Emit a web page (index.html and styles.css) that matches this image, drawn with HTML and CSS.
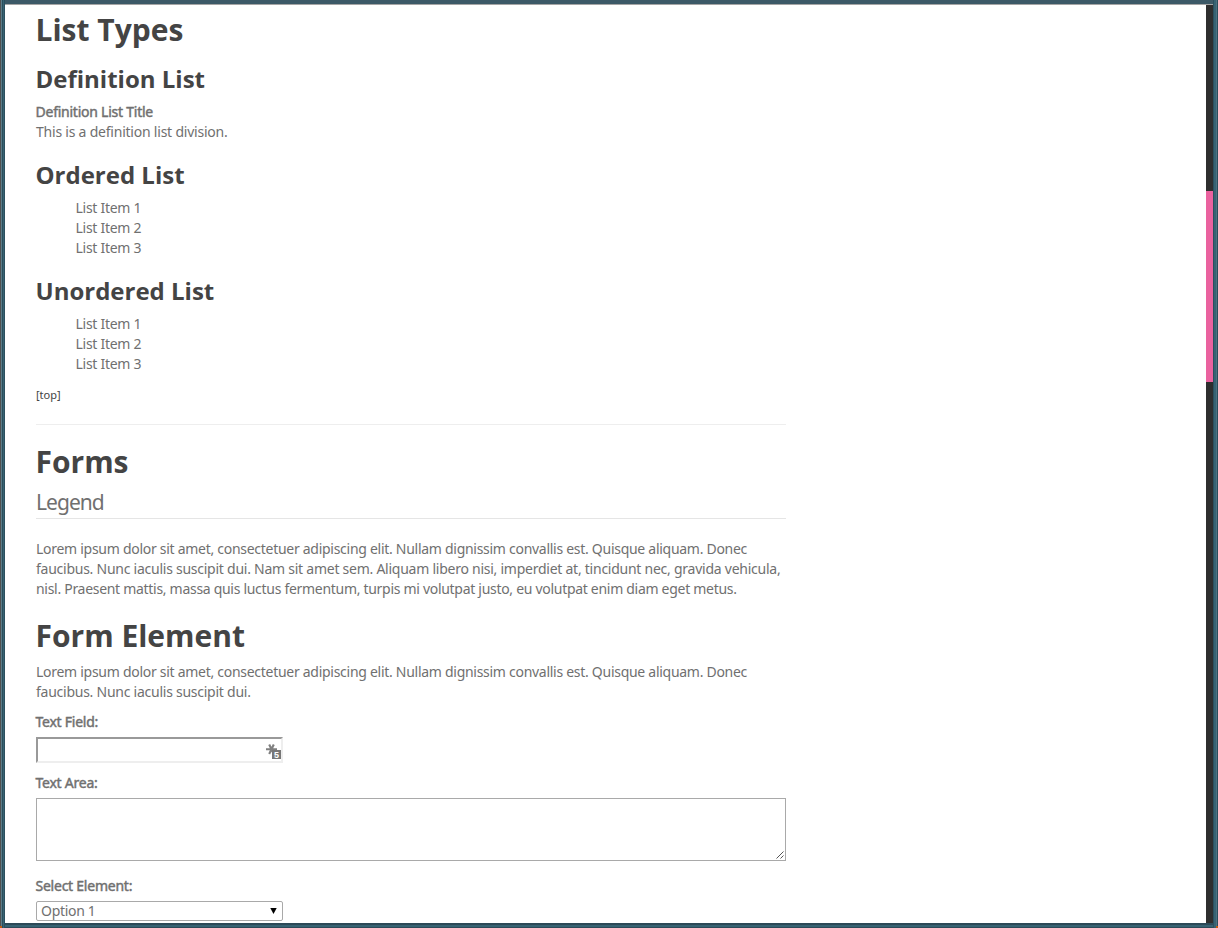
FILE: index.html
```html
<!DOCTYPE html>
<html lang="en">
<head>
<meta charset="utf-8">
<title>List Types and Forms</title>
<link rel="stylesheet" href="styles.css">
</head>
<body>
<div class="window">
<main class="content">
<h1>List Types</h1>
<h2 class="first">Definition List</h2>
<dl class="defs"><dt>Definition List Title</dt><dd>This is a definition list division.</dd></dl>
<h2>Ordered List</h2>
<ol class="list"><li>List Item 1</li><li>List Item 2</li><li>List Item 3</li></ol>
<h2>Unordered List</h2>
<ul class="list"><li>List Item 1</li><li>List Item 2</li><li>List Item 3</li></ul>
<p class="top">[top]</p>
<hr class="rule">
<h1>Forms</h1>
<div class="legend">Legend</div>
<p class="intro">Lorem ipsum dolor sit amet, consectetuer adipiscing elit. Nullam dignissim convallis est. Quisque aliquam. Donec<br><span class="loose">faucibus. Nunc iaculis suscipit dui. Nam sit amet sem. Aliquam libero nisi, imperdiet at, tincidunt nec, gravida vehicula,</span><br><span class="tight">nisl. Praesent mattis, massa quis luctus fermentum, turpis mi volutpat justo, eu volutpat enim diam eget metus.</span></p>
<h1 class="section">Form Element</h1>
<p>Lorem ipsum dolor sit amet, consectetuer adipiscing elit. Nullam dignissim convallis est. Quisque aliquam. Donec<br><span class="loose">faucibus. Nunc iaculis suscipit dui.</span></p>
<div class="label">Text Field:</div>
<div class="field">
<svg class="badge" width="15" height="17" viewBox="0 0 15 17"><path d="M0 6.2h11M3.2 1.5l4.6 9.5M7.8 1.5l-4.6 9.5" stroke="#808080" stroke-width="2.1" fill="none"/><rect x="6" y="7" width="9" height="9" fill="#777"/><text class="badge-text" x="8" y="14.8">5</text></svg>
</div>
<div class="label">Text Area:</div>
<div class="area"><svg class="grip" width="9" height="9" viewBox="0 0 9 9"><path d="M0.5 7.5l7-7M4.5 7.5l3-3" stroke="#555"/></svg></div>
<div class="label after-area">Select Element:</div>
<div class="select"><span>Option 1</span><svg width="7" height="6" viewBox="0 0 7 6"><path d="M.3 0h6.4L3.5 6z" fill="#000"/></svg></div>
</main>
<div class="track"><div class="thumb"></div></div>
</div>
</body>
</html>
```
FILE: styles.css
```css
* { box-sizing: border-box; }
body {
  margin: 0;
  height: 928px;
  overflow: hidden;
  padding: 4px 5px 5px 5px;
  font: 14px/20px "Noto Sans", sans-serif;
  letter-spacing: -0.28px;
  color: #707070;
  background:
    linear-gradient(#c55a11, #c55a11) 0 100% / 2px 2px no-repeat,
    linear-gradient(#c55a11, #c55a11) 100% 100% / 2px 2px no-repeat,
    linear-gradient(90deg, #505050 1px, #5b7c89 1px 2px, #2b4e5c 2px 3px, #376272 3px 4px, #2c4f5e 4px) 0 0 / 5px 100% no-repeat,
    linear-gradient(90deg, #2c4f5e 1px, #376272 1px 3px, #4d7180 3px 4px, #2b4e5c 4px) 100% 0 / 5px 100% no-repeat,
    linear-gradient(#2c4a58 2px, #376272 2px 4px, #2c4a58 4px) 0 100% / 100% 5px no-repeat,
    #3c5967;
}
.window { display: flex; justify-content: space-between; height: 919px; background: #fff; border-top: 1px solid #a5a5a5; overflow: hidden; }
.content { width: 781px; padding: 5px 0 0 31px; white-space: nowrap; }
h1, h2, p, dl, ol, ul, dd { margin: 0; }
h1, h2 { position: relative; left: -0.5px; font-family: "Open Sans", sans-serif; font-weight: 700; color: #444; letter-spacing: 0; }
h1 { font-size: 30px; line-height: 40px; }
h2 { font-size: 24px; line-height: 40px; margin: 13px 0 3px; }
h2.first { margin-top: 9px; }
dt, .label { text-indent: -0.5px; letter-spacing: -0.24px; -webkit-text-stroke: 0.45px #707070; }
dd { letter-spacing: -0.22px; }
.list { list-style: none; padding: 0 0 0 39.5px; }
.loose { letter-spacing: -0.25px; }
.tight { letter-spacing: -0.295px; }
.track { width: 7px; background: #2e2e2e; padding-top: 186px; }
.thumb { height: 191px; background: #ea629f; }
.top { margin-top: 11px; font-size: 11px; color: #444; letter-spacing: 0; }
.rule { border: 0; border-top: 1px solid #eee; margin: 19px 0 17px; }
.legend { font-size: 21px; line-height: 32px; padding-top: 4px; letter-spacing: -0.95px; border-bottom: 1px solid #e5e5e5; }
.intro { margin-top: 20px; }
h1.section { margin: 17px 0 6px; }
.label { margin: 10px 0 5px; }
.field { width: 247px; height: 26px; border: 2px solid; border-color: #999 #eee #eee #999; display: flex; justify-content: flex-end; align-items: flex-end; padding-bottom: 1px; }
.badge-text { font: 700 9px "Liberation Sans", sans-serif; letter-spacing: 0; fill: #fff; }
.area { height: 63px; border: 1px solid #a9a9a9; display: flex; justify-content: flex-end; align-items: flex-end; }
.label.after-area { margin-top: 15px; }
.select { width: 247px; height: 20px; border: 1px solid #a9a9a9; border-radius: 2px; display: flex; justify-content: space-between; align-items: center; padding: 0 5px 0 4px; letter-spacing: -0.3px; }
```
